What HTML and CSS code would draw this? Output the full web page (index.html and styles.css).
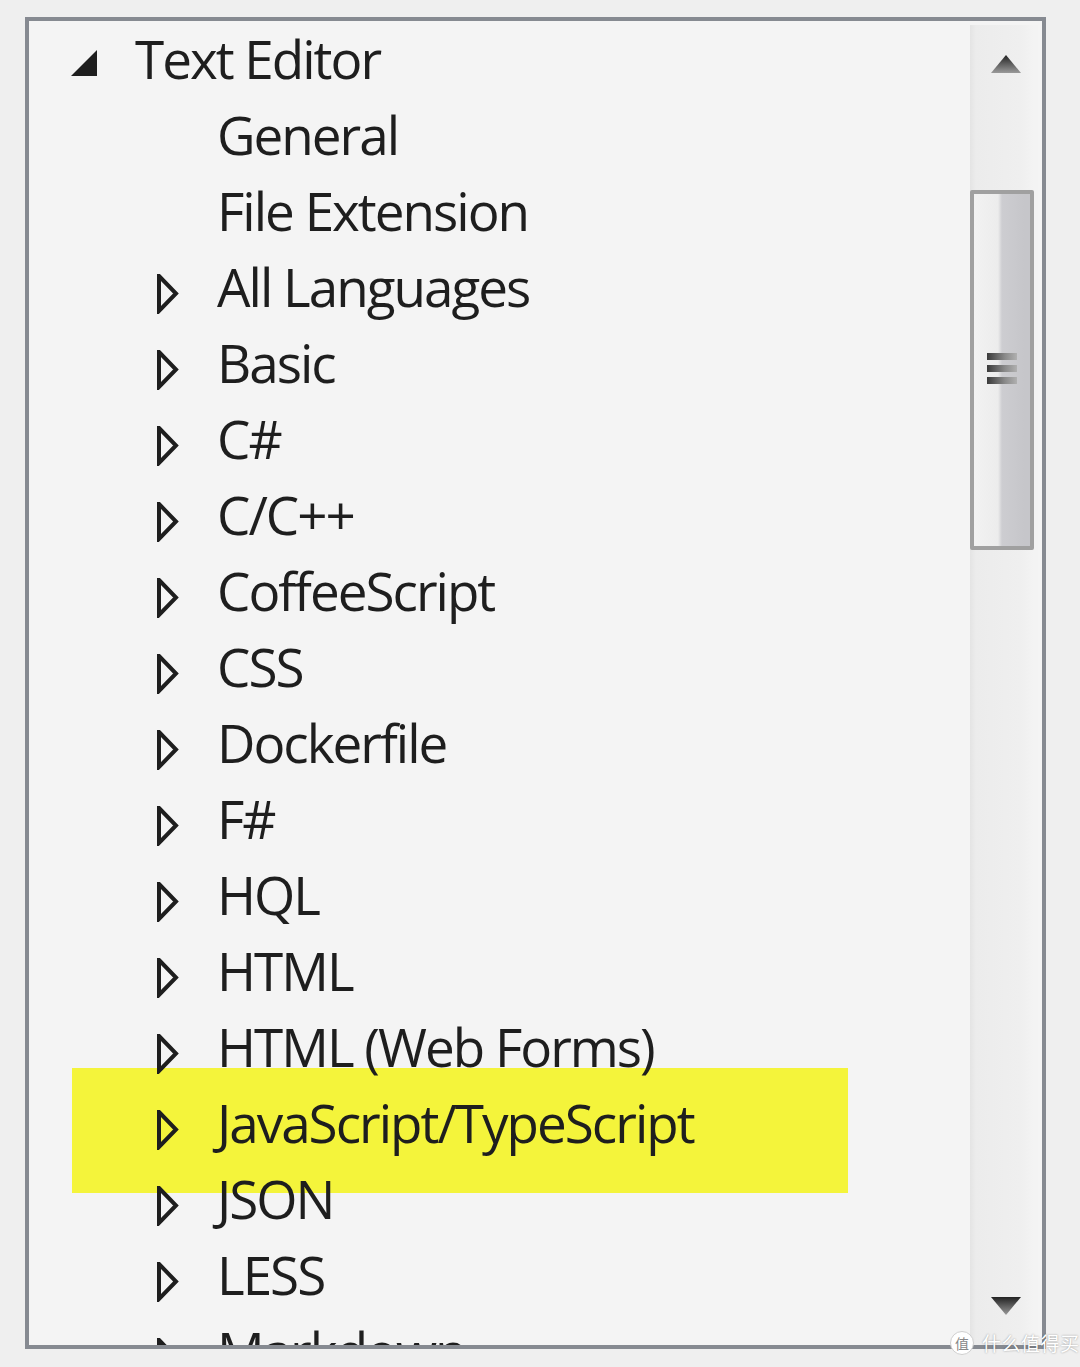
FILE: index.html
```html
<!DOCTYPE html>
<html lang="en">
<head>
  <meta charset="UTF-8" />
  <title>Options - Text Editor</title>
  <link rel="stylesheet" href="styles.css">
</head>
<body>

<div class="tree-window">
  <div class="tree">
    <div class="highlight"></div>

    <div class="row level0">
      <span class="exp"><svg class="open" width="26" height="26" viewBox="0 0 26 26"><polygon points="26,0 26,26 0,26" fill="#1e1e1e"/></svg></span>
      <span class="label">Text Editor</span>
    </div>
    <div class="row level1"><span class="exp"></span><span class="label">General</span></div>
    <div class="row level1"><span class="exp"></span><span class="label">File Extension</span></div>
    <div class="row level1"><span class="exp"><svg class="closed" width="22" height="40" viewBox="0 0 22 40"><polygon points="2,2 19,19.5 2,37" fill="none" stroke="#1e1e1e" stroke-width="4"/></svg></span><span class="label">All Languages</span></div>
    <div class="row level1"><span class="exp"><svg class="closed" width="22" height="40" viewBox="0 0 22 40"><polygon points="2,2 19,19.5 2,37" fill="none" stroke="#1e1e1e" stroke-width="4"/></svg></span><span class="label">Basic</span></div>
    <div class="row level1"><span class="exp"><svg class="closed" width="22" height="40" viewBox="0 0 22 40"><polygon points="2,2 19,19.5 2,37" fill="none" stroke="#1e1e1e" stroke-width="4"/></svg></span><span class="label">C#</span></div>
    <div class="row level1"><span class="exp"><svg class="closed" width="22" height="40" viewBox="0 0 22 40"><polygon points="2,2 19,19.5 2,37" fill="none" stroke="#1e1e1e" stroke-width="4"/></svg></span><span class="label">C/C++</span></div>
    <div class="row level1"><span class="exp"><svg class="closed" width="22" height="40" viewBox="0 0 22 40"><polygon points="2,2 19,19.5 2,37" fill="none" stroke="#1e1e1e" stroke-width="4"/></svg></span><span class="label">CoffeeScript</span></div>
    <div class="row level1"><span class="exp"><svg class="closed" width="22" height="40" viewBox="0 0 22 40"><polygon points="2,2 19,19.5 2,37" fill="none" stroke="#1e1e1e" stroke-width="4"/></svg></span><span class="label">CSS</span></div>
    <div class="row level1"><span class="exp"><svg class="closed" width="22" height="40" viewBox="0 0 22 40"><polygon points="2,2 19,19.5 2,37" fill="none" stroke="#1e1e1e" stroke-width="4"/></svg></span><span class="label">Dockerfile</span></div>
    <div class="row level1"><span class="exp"><svg class="closed" width="22" height="40" viewBox="0 0 22 40"><polygon points="2,2 19,19.5 2,37" fill="none" stroke="#1e1e1e" stroke-width="4"/></svg></span><span class="label">F#</span></div>
    <div class="row level1"><span class="exp"><svg class="closed" width="22" height="40" viewBox="0 0 22 40"><polygon points="2,2 19,19.5 2,37" fill="none" stroke="#1e1e1e" stroke-width="4"/></svg></span><span class="label">HQL</span></div>
    <div class="row level1"><span class="exp"><svg class="closed" width="22" height="40" viewBox="0 0 22 40"><polygon points="2,2 19,19.5 2,37" fill="none" stroke="#1e1e1e" stroke-width="4"/></svg></span><span class="label">HTML</span></div>
    <div class="row level1"><span class="exp"><svg class="closed" width="22" height="40" viewBox="0 0 22 40"><polygon points="2,2 19,19.5 2,37" fill="none" stroke="#1e1e1e" stroke-width="4"/></svg></span><span class="label">HTML (Web Forms)</span></div>
    <div class="row level1"><span class="exp"><svg class="closed" width="22" height="40" viewBox="0 0 22 40"><polygon points="2,2 19,19.5 2,37" fill="none" stroke="#1e1e1e" stroke-width="4"/></svg></span><span class="label">JavaScript/TypeScript</span></div>
    <div class="row level1"><span class="exp"><svg class="closed" width="22" height="40" viewBox="0 0 22 40"><polygon points="2,2 19,19.5 2,37" fill="none" stroke="#1e1e1e" stroke-width="4"/></svg></span><span class="label">JSON</span></div>
    <div class="row level1"><span class="exp"><svg class="closed" width="22" height="40" viewBox="0 0 22 40"><polygon points="2,2 19,19.5 2,37" fill="none" stroke="#1e1e1e" stroke-width="4"/></svg></span><span class="label">LESS</span></div>
    <div class="row level1"><span class="exp"><svg class="closed" width="22" height="40" viewBox="0 0 22 40"><polygon points="2,2 19,19.5 2,37" fill="none" stroke="#1e1e1e" stroke-width="4"/></svg></span><span class="label">Markdown</span></div>
  </div>

  <div class="scrollbar">
    <div class="sb-btn">
      <svg width="30" height="18" viewBox="0 0 30 18"><defs><linearGradient id="gu" x1="0" y1="0" x2="0" y2="1"><stop offset="0" stop-color="#222"/><stop offset="1" stop-color="#9a9a9a"/></linearGradient></defs><polygon points="15,0 30,18 0,18" fill="url(#gu)"/></svg>
    </div>
    <div class="thumb">
      <div class="grip">
        <span></span><span></span><span></span>
      </div>
    </div>
    <div class="sb-space"></div>
    <div class="sb-btn">
      <svg width="30" height="18" viewBox="0 0 30 18"><defs><linearGradient id="gd" x1="0" y1="0" x2="0" y2="1"><stop offset="0" stop-color="#222"/><stop offset="1" stop-color="#9a9a9a"/></linearGradient></defs><polygon points="0,0 30,0 15,18" fill="url(#gd)"/></svg>
    </div>
  </div>
</div>

<div class="watermark">
  <span class="wm-logo">值</span>
  <span class="wm-text">什么值得买</span>
</div>

</body>
</html>
```

FILE: styles.css
```css
body {
  margin: 0;
  padding: 17px 0 0 25px;
  background: #efefef;
  font-family: "Open Sans", "Noto Sans", sans-serif;
  color: #1e1e1e;
}
.tree-window {
  width: 1013px;
  height: 1324px;
  border: 4px solid #868a91;
  background: #f4f4f4;
  display: flex;
  overflow: hidden;
}
.tree {
  flex: 1;
  position: relative;
}
.row {
  position: relative;
  display: flex;
  align-items: flex-start;
  height: 76px;
  line-height: 76px;
  font-size: 53px;
  letter-spacing: -2px;
  white-space: nowrap;
}
.level0 {
  padding-left: 42px;
}
.level1 {
  padding-left: 128px;
}
.exp {
  flex: none;
  width: 64px;
}
.level1 .exp {
  width: 60px;
}
.exp svg {
  display: block;
}
.exp .open {
  margin-top: 29px;
}
.exp .closed {
  margin-top: 25px;
}
.highlight {
  position: absolute;
  left: 43px;
  top: 1047px;
  width: 776px;
  height: 125px;
  background: #f4f43b;
}
.scrollbar {
  flex: none;
  width: 68px;
  margin: 4px 4px 0 0;
  display: flex;
  flex-direction: column;
  background: linear-gradient(to right, #e4e4e4 0, #ececec 6px, #efefef 50px, #f3f3f3 64px);
}
.sb-btn {
  height: 78px;
  display: flex;
  align-items: center;
  justify-content: center;
  padding-left: 4px;
}
.thumb {
  margin-top: 87px;
  width: 56px;
  height: 352px;
  border: 4px solid #a0a0a0;
  border-radius: 2px;
  background: linear-gradient(to right, #f2f2f2 0, #ececec 24px, #cdcdd1 28px, #c6c6ca 50px);
  position: relative;
}
.grip {
  position: absolute;
  left: 13px;
  top: 159px;
  width: 30px;
  display: flex;
  flex-direction: column;
  gap: 5px;
}
.grip span {
  height: 7px;
  background: linear-gradient(to right, #3a3a3a, #8a8a8a 60%, #b0b0b0);
}
.sb-space {
  flex: 1;
}
.watermark {
  position: absolute;
  left: 950px;
  top: 1331px;
  height: 24px;
  display: flex;
  align-items: center;
  gap: 8px;
  color: #ffffff;
  font-family: "Noto Sans CJK SC", sans-serif;
  text-shadow: 0 0 2px rgba(0, 0, 0, 0.4);
}
.wm-logo {
  width: 22px;
  height: 22px;
  border-radius: 50%;
  border: 1px solid #cfcfcf;
  background: #ffffff;
  color: #888888;
  text-shadow: none;
  font-size: 14px;
  line-height: 22px;
  text-align: center;
}
.wm-text {
  font-size: 19px;
  line-height: 24px;
  letter-spacing: 0.5px;
}
```
